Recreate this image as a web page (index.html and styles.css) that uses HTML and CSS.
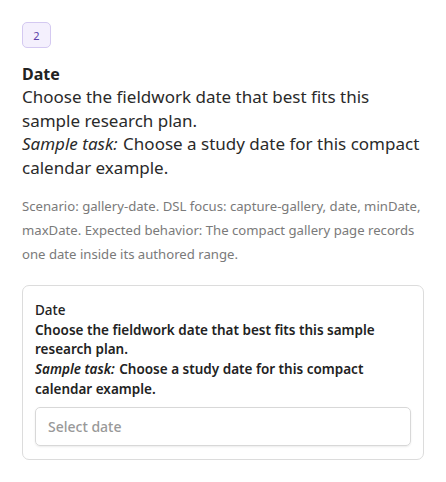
FILE: index.html
```html
<!DOCTYPE html>
<html>
<head>
<meta charset="utf-8">
<link rel="stylesheet" href="styles.css">
</head>
<body>
<main class="page">
  <div class="badge">2</div>
  <h1 class="title">Date</h1>
  <div class="desc">Choose the fieldwork date that best fits this sample research plan.<br><em>Sample task:</em> Choose a study date for this compact calendar example.</div>
  <p class="meta">Scenario: gallery-date. DSL focus: capture-gallery, date, minDate, maxDate. Expected behavior: The compact gallery page records one date inside its authored range.</p>
  <section class="card">
    <div class="card-label">Date</div>
    <div class="card-desc">Choose the fieldwork date that best fits this sample research plan.<br><em>Sample task:</em> Choose a study date for this compact calendar example.</div>
    <div class="input">Select date</div>
  </section>
</main>
</body>
</html>
```
FILE: styles.css
```css
* { box-sizing: border-box; }
body {
  margin: 0;
  background: #fff;
  font-family: "Noto Sans", "Open Sans", sans-serif;
  color: #222;
}
.page {
  padding: 22px 22px;
  display: flex;
  flex-direction: column;
  align-items: flex-start;
}
.badge {
  width: 29px;
  height: 26px;
  border: 1px solid #d4c9f1;
  background: #f4f0fd;
  border-radius: 5px;
  color: #5b3fa8;
  font-size: 11px;
  display: flex;
  align-items: center;
  justify-content: center;
}
.title {
  margin: 15px 0 0;
  font-size: 16px;
  line-height: 22px;
  font-weight: 700;
}
.desc {
  font-size: 17px;
  line-height: 23.5px;
  color: #2a2a2a;
}
.desc em { padding-right: 1px; }
.meta {
  margin: 15px 0 0;
  font-size: 13.15px;
  line-height: 24px;
  color: #7a7a7a;
}
.card {
  margin-top: 19px;
  align-self: stretch;
  border: 1px solid #dcdcdc;
  border-radius: 7px;
  padding: 15px 12px 13px;
}
.card-label {
  font-size: 13.5px;
  line-height: 19.7px;
  font-weight: 500;
  color: #222;
}
.card-desc {
  font-size: 13.5px;
  line-height: 19.7px;
  font-weight: 600;
  color: #222;
}
.card-desc em { font-weight: 600; padding-right: 1px; }
.input {
  margin-top: 7px;
  height: 39px;
  border: 1px solid #d8d8d8;
  border-radius: 5px;
  box-shadow: 0 1px 2px rgba(0,0,0,0.08);
  padding: 0 12px;
  display: flex;
  align-items: center;
  font-size: 14px;
  color: #999;
  font-weight: 500;
}
```
